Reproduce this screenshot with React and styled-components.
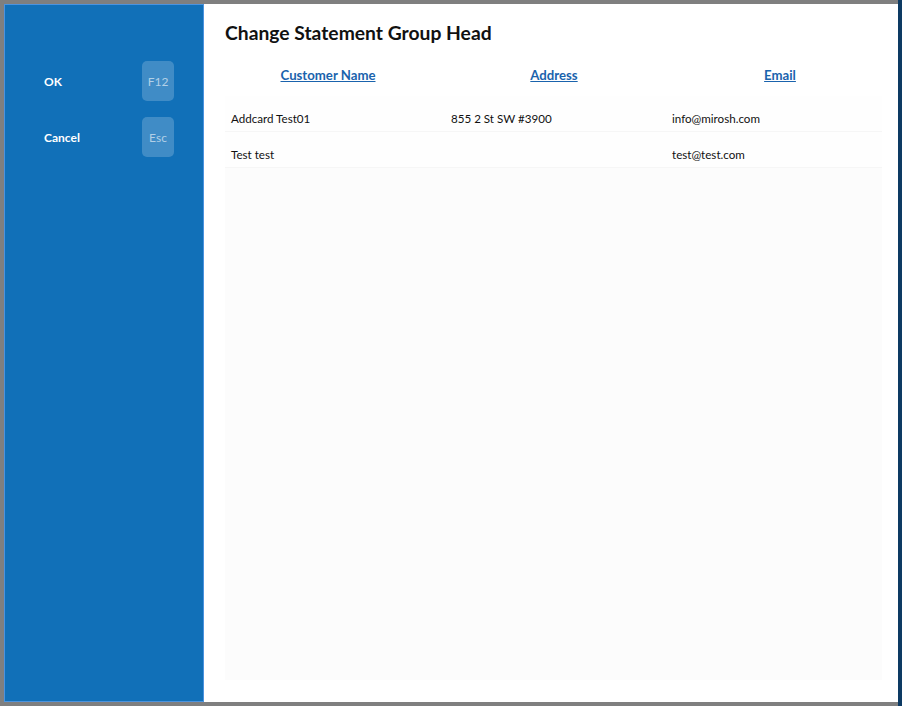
import React from 'react';
import styled, { createGlobalStyle } from 'styled-components';

const GlobalStyle = createGlobalStyle`
  html, body {
    margin: 0;
    padding: 0;
    background: #7f7f7f;
    font-family: Lato, "Noto Sans", sans-serif;
  }
`;

const Backdrop = styled.div`
  width: 902px;
  height: 706px;
  box-sizing: border-box;
  padding: 4px 0 4px 4px;
  background: #7f7f7f;
  border-right: 4px solid #0d3a63;
  overflow: hidden;
`;

const Modal = styled.div`
  display: flex;
  width: 894px;
  height: 698px;
  background: #ffffff;
`;

const Sidebar = styled.div`
  width: 200px;
  box-sizing: border-box;
  background: #1170b8;
  border: 1px solid #4b93df;
  padding: 56px 29px 0 39px;
  display: flex;
  flex-direction: column;
  gap: 16px;
`;

const Action = styled.div`
  display: flex;
  align-items: center;
  justify-content: space-between;
  height: 40px;
  color: #ffffff;
  font-size: 12px;
  font-weight: 700;
`;

const Key = styled.span`
  width: 32px;
  height: 40px;
  border-radius: 5px;
  background: rgba(255, 255, 255, 0.2);
  color: rgba(255, 255, 255, 0.6);
  font-size: 12px;
  font-weight: 400;
  display: flex;
  align-items: center;
  justify-content: center;
`;

const Content = styled.div`
  flex: 1;
  padding: 17px 16px 22px 21px;
  display: flex;
  flex-direction: column;
`;

const Title = styled.h1`
  margin: 0;
  font-size: 19.3px;
  font-weight: 700;
  color: #111;
  line-height: 24px;
`;

const HeaderRow = styled.div`
  display: grid;
  grid-template-columns: repeat(3, 1fr);
  margin: 14px -11px 0 -10px;
  height: 31px;
  align-items: center;
`;

const HeaderCell = styled.a`
  justify-self: center;
  color: #1a63ad;
  font-size: 13.2px;
  font-weight: 700;
  text-decoration: underline;
  cursor: pointer;
`;

const Body = styled.div`
  flex: 1;
  margin-top: 6px;
  background: #fcfcfc;
`;

const Row = styled.div`
  display: grid;
  grid-template-columns: 220px 221px 1fr;
  height: 36px;
  padding-top: 10px;
  align-items: center;
  background: #fefefe;
  border-bottom: 1px solid #f6f6f6;
  box-sizing: border-box;
`;

const Cell = styled.div`
  padding-left: 6px;
  font-size: 11.6px;
  color: #111;
`;

const rows = [
  ['Addcard Test01', '855 2 St SW #3900', 'info@mirosh.com'],
  ['Test test', '', 'test@test.com'],
];

export default function App() {
  return (
    <>
      <GlobalStyle />
      <Backdrop>
        <Modal>
          <Sidebar>
            <Action>
              OK <Key>F12</Key>
            </Action>
            <Action>
              Cancel <Key>Esc</Key>
            </Action>
          </Sidebar>
          <Content>
            <Title>Change Statement Group Head</Title>
            <HeaderRow>
              <HeaderCell>Customer Name</HeaderCell>
              <HeaderCell>Address</HeaderCell>
              <HeaderCell>Email</HeaderCell>
            </HeaderRow>
            <Body>
              {rows.map((r, i) => (
                <Row key={i}>
                  {r.map((c, j) => (
                    <Cell key={j}>{c}</Cell>
                  ))}
                </Row>
              ))}
            </Body>
          </Content>
        </Modal>
      </Backdrop>
    </>
  );
}
